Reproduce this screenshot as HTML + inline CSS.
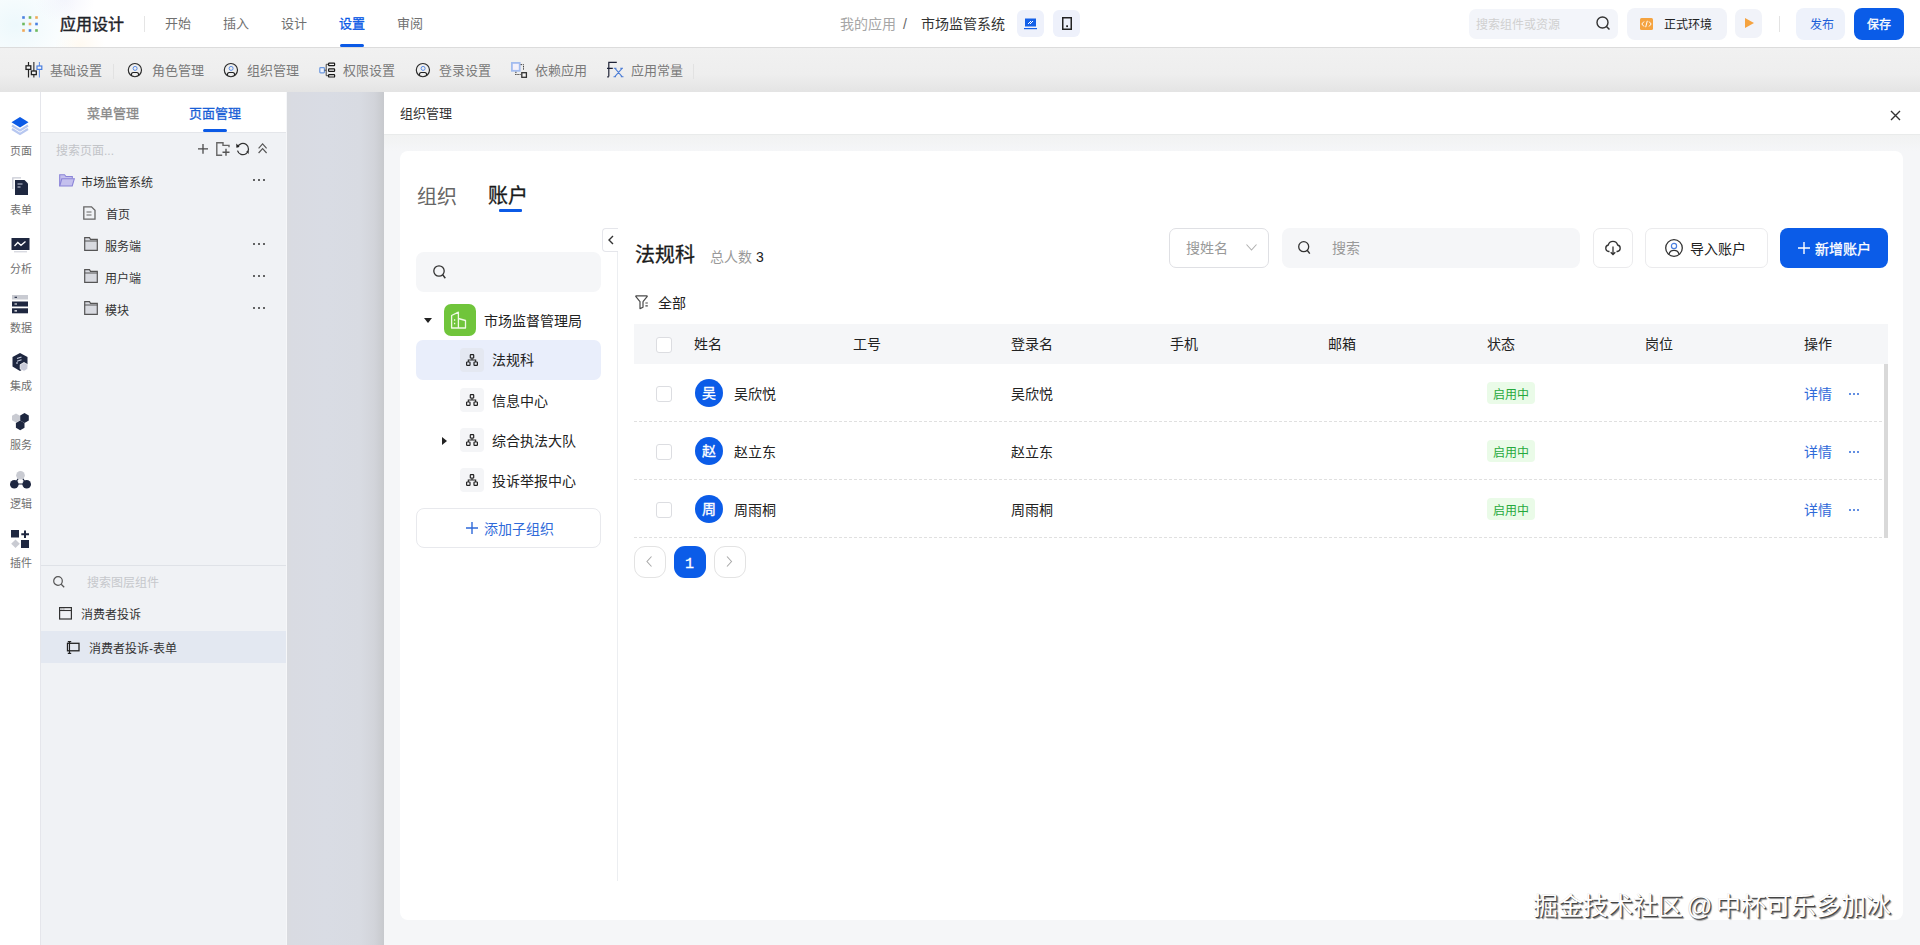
<!DOCTYPE html>
<html lang="zh-CN">
<head>
<meta charset="utf-8">
<style>
*{box-sizing:border-box;margin:0;padding:0}
html,body{width:1920px;height:945px;overflow:hidden;background:#fff;font-family:"Liberation Sans",sans-serif;color:#1f2329;position:relative}
.a{position:absolute}
.t{position:absolute;white-space:nowrap;line-height:1}
svg{position:absolute;overflow:visible}
#hdr{position:absolute;left:0;top:0;width:1920px;height:48px;background:#fff;border-bottom:1px solid #dcdcdc;overflow:hidden}
#tb{position:absolute;left:0;top:48px;width:1920px;height:44px;background:linear-gradient(#f1f1f1 0%,#eeeeee 60%,#e4e4e4 100%)}
#rail{position:absolute;left:0;top:92px;width:41px;height:853px;background:#fff;border-right:1px solid #e5e6eb}
#lp{position:absolute;left:41px;top:92px;width:246px;height:853px;background:#f0f2f5}
#mask{position:absolute;left:287px;top:92px;width:97px;height:853px;background:linear-gradient(90deg,#d9dbdf 0%,#d9dbe2 5%,#d9dce4 40%,#d8dbe2 75%,#d2d4da 90%,#c7c9cd 100%)}
#drawer{position:absolute;left:384px;top:92px;width:1536px;height:853px;background:#f5f6f8}
.nav{font-size:13px;color:#707070}
.tbi{font-size:13px;color:#7a7a7a}
.rl{font-size:11px;color:#707070}
.lpt{font-size:12px;color:#333}
.th{font-size:14px;color:#222}
.td{font-size:14px;color:#222}
.dots{position:absolute;width:14px;height:3px}
.dots i{position:absolute;top:0;width:2.4px;height:2.4px;border-radius:50%;background:#333}
</style>
</head>
<body>
<div id="hdr">
  <div class="a" style="left:-50px;top:-30px;width:130px;height:110px;border-radius:50%;background:radial-gradient(closest-side,rgba(215,240,248,.45),rgba(255,255,255,0))"></div>
  <div class="a" style="left:35px;top:-25px;width:60px;height:50px;border-radius:50%;background:radial-gradient(closest-side,rgba(232,234,250,.45),rgba(255,255,255,0))"></div>
  <div class="a" style="left:55px;top:25px;width:50px;height:40px;border-radius:50%;background:radial-gradient(closest-side,rgba(255,244,225,.45),rgba(255,255,255,0))"></div>
</div>
<div id="tb"></div>
<div id="rail"></div>
<div id="lp"></div>
<div id="mask"></div>
<div id="drawer"></div>

<!-- ============ HEADER CONTENT ============ -->
<svg style="left:22px;top:16px" width="17" height="16">
  <rect x="0.2" y="0.2" width="2.6" height="2.6" fill="#4a80e0"/><rect x="6.7" y="0.2" width="2.6" height="2.6" fill="#6db85e"/><rect x="13.2" y="0.2" width="2.6" height="2.6" fill="#f0a858"/>
  <rect x="0.2" y="6.7" width="2.6" height="2.6" fill="#6db85e"/><rect x="6.7" y="6.7" width="2.6" height="2.6" fill="#f0b068"/><rect x="13.2" y="6.7" width="2.6" height="2.6" fill="#4a80e0"/>
  <rect x="0.2" y="13.2" width="2.6" height="2.6" fill="#f0a858"/><rect x="6.7" y="13.2" width="2.6" height="2.6" fill="#4a80e0"/><rect x="13.2" y="13.2" width="2.6" height="2.6" fill="#6db85e"/>
</svg>
<div class="t" style="left:60px;top:17px;font-size:16px;-webkit-text-stroke:0.45px;color:#1f2329">应用设计</div>
<div class="a" style="left:144px;top:16px;width:1px;height:16px;background:#e5e5e5"></div>
<div class="t nav" style="left:165px;top:17px">开始</div>
<div class="t nav" style="left:223px;top:17px">插入</div>
<div class="t nav" style="left:281px;top:17px">设计</div>
<div class="t nav" style="left:339px;top:17px;color:#0b5ae6;font-weight:400;-webkit-text-stroke:0.3px">设置</div>
<div class="a" style="left:340px;top:44px;width:24px;height:3px;border-radius:2px;background:#0b5ae6"></div>
<div class="t nav" style="left:397px;top:17px">审阅</div>
<div class="t" style="left:840px;top:17px;font-size:14px;color:#a6a6a6">我的应用</div>
<div class="t" style="left:903px;top:17px;font-size:14px;color:#666">/</div>
<div class="t" style="left:921px;top:17px;font-size:14px;color:#333">市场监管系统</div>
<div class="a" style="left:1017px;top:10px;width:27px;height:27px;border-radius:6px;background:#eef1fb"></div>
<svg style="left:1024px;top:18px" width="14" height="12"><rect x="1" y="0.5" width="11" height="8" fill="#1460e8"/><path d="M4 6 L7 3 M6 6 L9 3" stroke="#fff" stroke-width="1"/><rect x="0" y="10" width="13" height="1.2" fill="#1460e8"/></svg>
<div class="a" style="left:1053px;top:10px;width:27px;height:27px;border-radius:6px;background:#eef1fb"></div>
<svg style="left:1062px;top:17px" width="10" height="13"><rect x="0.75" y="0.75" width="8.5" height="11.5" fill="none" stroke="#222" stroke-width="1.5"/><rect x="4.2" y="8.3" width="1.8" height="1.8" fill="#222"/></svg>
<div class="a" style="left:1469px;top:9px;width:149px;height:30px;border-radius:7px;background:#f3f5fa"></div>
<div class="t" style="left:1476px;top:19px;font-size:12px;color:#d0d0d0">搜索组件或资源</div>
<svg style="left:1596px;top:16px" width="15" height="15"><circle cx="6.5" cy="6.5" r="5.5" fill="none" stroke="#333" stroke-width="1.4"/><path d="M10.5 10.5 L13.5 13.5" stroke="#333" stroke-width="1.5"/></svg>
<div class="a" style="left:1627px;top:8px;width:100px;height:32px;border-radius:8px;background:#f1f3f9"></div>
<svg style="left:1640px;top:18px" width="13" height="12"><rect width="13" height="12" rx="1.5" fill="#f5a340"/><path d="M4 3.5 L1.8 6 L4 8.5 M9 3.5 L11.2 6 L9 8.5 M7.3 2.8 L5.7 9.2" stroke="#fff" stroke-width="1" fill="none"/></svg>
<div class="t" style="left:1664px;top:19px;font-size:12px;color:#222">正式环境</div>
<div class="a" style="left:1735px;top:9px;width:27px;height:29px;border-radius:7px;background:#f1f3f9"></div>
<svg style="left:1745px;top:18px" width="9" height="10"><path d="M0 0 L9 5 L0 10 Z" fill="#f5a340"/></svg>
<div class="a" style="left:1779px;top:16px;width:1px;height:16px;background:#e3e3e3"></div>
<div class="a" style="left:1796px;top:8px;width:49px;height:32px;border-radius:8px;background:#eef2fb"></div>
<div class="t" style="left:1810px;top:19px;font-size:12px;color:#1d5fd8">发布</div>
<div class="a" style="left:1854px;top:8px;width:50px;height:32px;border-radius:8px;background:#0a5ce8"></div>
<div class="t" style="left:1867px;top:19px;font-size:12px;color:#fff;font-weight:400;-webkit-text-stroke:0.3px">保存</div>

<!-- ============ TOOLBAR ============ -->
<svg style="left:25px;top:62px" width="18" height="16">
  <path d="M3.5 0 V15.5" stroke="#222" stroke-width="1.2"/><path d="M8.8 0 V15.5" stroke="#666" stroke-width="1.6"/><path d="M14.4 0 V15.5" stroke="#5a8de8" stroke-width="1"/>
  <rect x="1" y="3.8" width="4.8" height="3.6" fill="#f4f4f4" stroke="#222" stroke-width="1.3"/><rect x="6.4" y="9" width="4.9" height="3.6" fill="#f4f4f4" stroke="#222" stroke-width="1.3"/><rect x="12" y="4" width="4.8" height="3.4" fill="#f4f4f4" stroke="#4a7fe0" stroke-width="1.2"/>
</svg>
<div class="t tbi" style="left:50px;top:64px">基础设置</div>
<div class="a" style="left:113px;top:64px;width:1px;height:15px;background:#e2e2e2"></div>
<svg style="left:127px;top:62px" width="16" height="16"><circle cx="7.9" cy="8.1" r="6.6" fill="none" stroke="#2a2a2a" stroke-width="1.15"/><circle cx="8.1" cy="6.4" r="2" fill="none" stroke="#5a8de8" stroke-width="1"/><path d="M4.3 13.2 Q4.4 10.5 6.2 10.5 H9.8 Q11.6 10.5 11.7 13.2" fill="none" stroke="#222" stroke-width="1.15"/></svg>
<div class="t tbi" style="left:152px;top:64px">角色管理</div>
<svg style="left:223px;top:62px" width="16" height="16"><circle cx="7.9" cy="8.1" r="6.6" fill="none" stroke="#2a2a2a" stroke-width="1.15"/><circle cx="8.1" cy="6.4" r="2" fill="none" stroke="#5a8de8" stroke-width="1"/><path d="M4.3 13.2 Q4.4 10.5 6.2 10.5 H9.8 Q11.6 10.5 11.7 13.2" fill="none" stroke="#222" stroke-width="1.15"/></svg>
<div class="t tbi" style="left:247px;top:64px">组织管理</div>
<svg style="left:319px;top:62px" width="17" height="16"><rect x="0.8" y="5.6" width="4.6" height="5.2" rx="0.8" fill="#eef4ff" stroke="#6b97dd" stroke-width="1.2"/><path d="M5.4 8.2 H7.2 M7.2 2.3 V13.7 M7.2 2.3 H9.5 M7.2 13.7 H9.5" fill="none" stroke="#444" stroke-width="1"/><rect x="9.6" y="1.2" width="6" height="2.4" rx="0.6" fill="#f6f6f6" stroke="#1a1a1a" stroke-width="1.2"/><rect x="9.6" y="6.8" width="6" height="2.6" rx="0.6" fill="#f6f6f6" stroke="#1a1a1a" stroke-width="1.2"/><rect x="9.6" y="12.6" width="6" height="2.4" rx="0.6" fill="#f6f6f6" stroke="#1a1a1a" stroke-width="1.2"/></svg>
<div class="t tbi" style="left:343px;top:64px">权限设置</div>
<svg style="left:415px;top:62px" width="16" height="16"><circle cx="7.9" cy="8.1" r="6.6" fill="none" stroke="#2a2a2a" stroke-width="1.15"/><circle cx="8.1" cy="6.4" r="2" fill="none" stroke="#5a8de8" stroke-width="1"/><path d="M4.3 13.2 Q4.4 10.5 6.2 10.5 H9.8 Q11.6 10.5 11.7 13.2" fill="none" stroke="#222" stroke-width="1.15"/></svg>
<div class="t tbi" style="left:439px;top:64px">登录设置</div>
<svg style="left:511px;top:62px" width="17" height="16"><rect x="0.9" y="0.9" width="7.8" height="7.9" fill="#f4f1fb" stroke="#a3bcef" stroke-width="1.8"/><path d="M4.9 9.8 V11.6 M4.2 12.5 H9.6 M9.6 2.6 H12.5 V8.5" fill="none" stroke="#333" stroke-width="1" stroke-dasharray="1.3 0.9"/><rect x="10.8" y="10.7" width="4.6" height="4.6" fill="#f4f4f4" stroke="#333" stroke-width="1.3"/></svg>
<div class="t tbi" style="left:535px;top:64px">依赖应用</div>
<svg style="left:607px;top:61px" width="18" height="17"><path d="M1.8 15.6 V1.4 H9.8 M0 7.4 H5.8 M0.2 15.8 H1.8" fill="none" stroke="#1e2236" stroke-width="1.2"/><path d="M8 7.3 L15.3 15.8 M15.1 7.3 L7.6 15.8 M6.8 7.3 H9.5 M13.2 7.3 H16 M6.5 15.8 H9 M13.8 15.8 H16.5" fill="none" stroke="#4f7fd6" stroke-width="1.1"/></svg>
<div class="t tbi" style="left:631px;top:64px">应用常量</div>
<div class="a" style="left:693px;top:64px;width:1px;height:15px;background:#e2e2e2"></div>

<!-- ============ RAIL ============ -->
<svg style="left:11px;top:117px" width="18" height="20"><path d="M9 0 L17.5 5.2 L9 10.5 L0.5 5.2 Z" fill="#0b5ae6"/><path d="M1 8.5 L9 13.5 L17 8.5 M1 12 L9 17 L17 12" fill="none" stroke="#b7c7f0" stroke-width="2.2"/></svg>
<div class="t rl" style="left:9.5px;top:146px">页面</div>
<svg style="left:12px;top:177px" width="17" height="19"><path d="M0.8 12 V0.8 H9" fill="none" stroke="#c8cad4" stroke-width="1.3"/><path d="M3 3 H12.5 L16 6.5 V18 H3 Z" fill="#1e2740"/><path d="M5.5 7 H10.5 M5.5 10 H8.5" stroke="#c9cfe0" stroke-width="1.2"/></svg>
<div class="t rl" style="left:9.5px;top:205px">表单</div>
<svg style="left:11px;top:238px" width="19" height="15"><rect x="0.5" y="0" width="18" height="12" fill="#1e2740"/><path d="M3.5 8 L6.8 4.5 L10 7.3 L14.5 3.5" fill="none" stroke="#fff" stroke-width="1.3"/><path d="M3 13.8 H16" stroke="#c8cad4" stroke-width="1"/></svg>
<div class="t rl" style="left:9.5px;top:264px">分析</div>
<svg style="left:12px;top:295px" width="16" height="19"><rect x="0" y="0" width="16" height="4.5" fill="#c9cbd2"/><rect x="0" y="6.5" width="16" height="5" fill="#1e2740"/><rect x="0" y="13.3" width="16" height="5" fill="#1e2740"/><path d="M2.5 2.3 H5 M2.5 9 H5 M2.5 15.8 H5" stroke="#fff" stroke-width="1.2"/><path d="M2.5 2.3 H5" stroke="#1e2740" stroke-width="1.2"/></svg>
<div class="t rl" style="left:9.5px;top:323px">数据</div>
<svg style="left:12px;top:353px" width="17" height="19"><path d="M8 0 L15.5 4 V13.5 L8 18 L0.5 13.5 V4 Z" fill="#1e2740"/><path d="M5 5.5 L9.5 4 M5 8.2 L9.5 6.8 M5 9 L5 11" stroke="#c9cfe0" stroke-width="1.1"/><path d="M12 9.5 L15.8 11.7 V16 L12 18.3 L8.2 16 V11.7 Z" fill="#c9cbd9" stroke="#fff" stroke-width="0.8"/></svg>
<div class="t rl" style="left:9.5px;top:381px">集成</div>
<svg style="left:11px;top:413px" width="19" height="18"><path d="M5 0.5 L9 2.8 V7.2 L5 9.5 L1 7.2 V2.8 Z" fill="#c9cbd2"/><path d="M13.5 0 L17.8 2.5 V7.5 L13.5 10 L9.2 7.5 V2.5 Z" fill="#1e2740"/><path d="M9.2 7.5 L13.5 10 V14.8 L9.2 17.3 L4.9 14.8 V10 Z" fill="#1e2740"/></svg>
<div class="t rl" style="left:9.5px;top:440px">服务</div>
<svg style="left:10px;top:471px" width="21" height="18"><path d="M10.5 4.5 L4.5 13 H16.5 Z" fill="none" stroke="#1e2740" stroke-width="1.2"/><circle cx="10.5" cy="4.3" r="4.3" fill="#c9cbd2"/><circle cx="4.3" cy="13.3" r="4.3" fill="#1e2740"/><circle cx="16.7" cy="13.3" r="4.3" fill="#1e2740"/></svg>
<div class="t rl" style="left:9.5px;top:499px">逻辑</div>
<svg style="left:11px;top:530px" width="19" height="18"><rect x="0" y="0" width="8" height="7.5" fill="#1e2740"/><path d="M14 0.5 V8 M10.3 4.2 H18" stroke="#1e2740" stroke-width="2"/><path d="M4.5 9.5 L8.8 13.8 L4.5 18 L0.2 13.8 Z" fill="#c9cbd2"/><rect x="10" y="10" width="8" height="8" fill="#1e2740"/></svg>
<div class="t rl" style="left:9.5px;top:558px">插件</div>

<!-- ============ LEFT PANEL ============ -->
<div class="a" style="left:41px;top:92px;width:245px;height:41px;background:#fff;border-bottom:1px solid #e4e6ea"></div>
<div class="a" style="left:286px;top:92px;width:1px;height:853px;background:#f6f7f9"></div>
<div class="t" style="left:87px;top:107px;font-size:13px;color:#888;font-weight:400;-webkit-text-stroke:0.3px">菜单管理</div>
<div class="t" style="left:189px;top:107px;font-size:13px;color:#1a5fd6;font-weight:400;-webkit-text-stroke:0.3px">页面管理</div>
<div class="a" style="left:203px;top:129px;width:24px;height:3px;border-radius:2px;background:#0b5ae6"></div>
<div class="t" style="left:56px;top:145px;font-size:12px;color:#c2c4c8">搜索页面...</div>
<svg style="left:198px;top:144px" width="12" height="12"><path d="M5 0 V9.8 M0 4.9 H10" stroke="#4a4a4a" stroke-width="1.3"/></svg>
<svg style="left:216px;top:142px" width="15" height="15"><path d="M6.2 13.3 H0.8 V0.8 H7 V3.4 H13 V5.2" fill="none" stroke="#666" stroke-width="1.4"/><path d="M10 6.8 V13.8 M6.5 10.3 H13.5" stroke="#555" stroke-width="1.4"/></svg>
<svg style="left:236px;top:142px" width="14" height="14"><path d="M1.6 5.2 A5.6 5.6 0 1 1 1.5 8.6" fill="none" stroke="#333" stroke-width="1.25"/><path d="M0.3 1.6 L3.6 4.8 L0.3 5.7 Z" fill="#222"/><path d="M12.6 8.2 L12.7 12 L10.1 9.8 Z" fill="#333"/></svg>
<svg style="left:258px;top:143px" width="11" height="11"><path d="M0.6 5.3 L4.6 0.9 L8.6 5.3 M0.6 10 L4.6 5.6 L8.6 10" fill="none" stroke="#555" stroke-width="1.15"/></svg>
<svg style="left:59px;top:174px" width="16" height="13"><path d="M0.7 12 V0.7 H5.5 L7 2.5 H13.3 V4.5" fill="#c4c0ee" stroke="#8a84d8" stroke-width="1.1"/><path d="M0.7 12 L2.8 4.8 H15.3 L13.2 12 Z" fill="#c4c0ee" stroke="#8a84d8" stroke-width="1.1"/></svg>
<div class="t lpt" style="left:81px;top:177px">市场监管系统</div>
<div class="dots" style="left:253px;top:179px"><i style="left:0"></i><i style="left:5px"></i><i style="left:10px"></i></div>
<svg style="left:83px;top:206px" width="13" height="14"><path d="M0.8 0.8 H8.5 L12 4.3 V13.2 H0.8 Z" fill="none" stroke="#666" stroke-width="1.3"/><path d="M3.5 6 H8.5 M3.5 9 H8.5" stroke="#666" stroke-width="1.2"/></svg>
<div class="t lpt" style="left:106px;top:209px">首页</div>
<svg style="left:84px;top:237px" width="14" height="14"><path d="M0.7 13.3 V0.7 H5.5 L6.5 2.3 H13.3 V13.3 Z" fill="#d8dae0" stroke="#555" stroke-width="1.2"/><path d="M0.7 4 H13.3" stroke="#555" stroke-width="1"/></svg>
<div class="t lpt" style="left:105px;top:241px">服务端</div>
<div class="dots" style="left:253px;top:243px"><i style="left:0"></i><i style="left:5px"></i><i style="left:10px"></i></div>
<svg style="left:84px;top:269px" width="14" height="14"><path d="M0.7 13.3 V0.7 H5.5 L6.5 2.3 H13.3 V13.3 Z" fill="#d8dae0" stroke="#555" stroke-width="1.2"/><path d="M0.7 4 H13.3" stroke="#555" stroke-width="1"/></svg>
<div class="t lpt" style="left:105px;top:273px">用户端</div>
<div class="dots" style="left:253px;top:275px"><i style="left:0"></i><i style="left:5px"></i><i style="left:10px"></i></div>
<svg style="left:84px;top:301px" width="14" height="14"><path d="M0.7 13.3 V0.7 H5.5 L6.5 2.3 H13.3 V13.3 Z" fill="#d8dae0" stroke="#555" stroke-width="1.2"/><path d="M0.7 4 H13.3" stroke="#555" stroke-width="1"/></svg>
<div class="t lpt" style="left:105px;top:305px">模块</div>
<div class="dots" style="left:253px;top:307px"><i style="left:0"></i><i style="left:5px"></i><i style="left:10px"></i></div>

<div class="a" style="left:41px;top:565px;width:245px;height:1px;background:#dfe2e7"></div>
<svg style="left:53px;top:576px" width="12" height="12"><circle cx="5" cy="5" r="4.3" fill="none" stroke="#555" stroke-width="1.2"/><path d="M8.2 8.2 L11.2 11.2" stroke="#555" stroke-width="1.3"/></svg>
<div class="t" style="left:87px;top:577px;font-size:12px;color:#c6c8cc">搜索图层组件</div>
<svg style="left:59px;top:607px" width="13" height="13"><rect x="0.6" y="0.6" width="11.8" height="11.4" fill="none" stroke="#333" stroke-width="1.2"/><path d="M0.6 3.5 H12.4" stroke="#333" stroke-width="1.1"/><path d="M2.5 2 H3.3 M4.5 2 H5.3" stroke="#333" stroke-width="0.8"/></svg>
<div class="t lpt" style="left:81px;top:609px">消费者投诉</div>
<div class="a" style="left:41px;top:631px;width:245px;height:32px;background:#e3e8f1"></div>
<svg style="left:66px;top:641px" width="14" height="13"><rect x="1.5" y="2.3" width="11.5" height="7.5" fill="none" stroke="#222" stroke-width="1.3"/><path d="M3.5 0.6 V12.4 M1.8 0.6 H5.2 M1.8 12.4 H5.2" stroke="#222" stroke-width="1.1"/></svg>
<div class="t lpt" style="left:89px;top:643px">消费者投诉-表单</div>

<!-- ============ DRAWER ============ -->
<div class="a" style="left:384px;top:92px;width:1536px;height:43px;background:#fff;border-bottom:1px solid #e9ebeb"></div>
<div class="a" style="left:384px;top:135px;width:1536px;height:16px;background:linear-gradient(#f1f2f2,#f5f6f8)"></div>
<div class="t" style="left:400px;top:107px;font-size:13px;color:#333">组织管理</div>
<svg style="left:1889.5px;top:109.5px" width="11" height="11"><path d="M1 1 L10 10 M10 1 L1 10" stroke="#333" stroke-width="1.4"/></svg>
<div class="a" style="left:400px;top:151px;width:1503px;height:769px;background:#fff;border-radius:8px"></div>

<div class="t" style="left:417px;top:187px;font-size:20px;color:#666">组织</div>
<div class="t" style="left:488px;top:186px;font-size:20px;color:#1a1a1a;font-weight:400;-webkit-text-stroke:0.3px">账户</div>
<div class="a" style="left:499px;top:209px;width:23px;height:3px;border-radius:1px;background:#0b5ae6"></div>

<!-- org tree -->
<div class="a" style="left:416px;top:252px;width:185px;height:40px;background:#f5f6f8;border-radius:8px"></div>
<svg style="left:433px;top:265px" width="14" height="15"><circle cx="6" cy="6" r="5.2" fill="none" stroke="#333" stroke-width="1.3"/><path d="M9.7 9.8 L12.3 13.2" stroke="#333" stroke-width="1.4"/></svg>
<div class="a" style="left:617px;top:251px;width:1px;height:630px;background:#eceef1"></div>
<div class="a" style="left:602px;top:228px;width:16px;height:24px;border:1px solid #e5e6eb;border-right:none;border-radius:4px 0 0 4px;background:#fff"></div>
<svg style="left:607px;top:235px" width="8" height="10"><path d="M6 1 L2 5 L6 9" fill="none" stroke="#333" stroke-width="1.4"/></svg>

<svg style="left:424px;top:318px" width="8" height="5"><path d="M0 0 H8 L4 5 Z" fill="#222"/></svg>
<div class="a" style="left:444px;top:304px;width:32px;height:32px;border-radius:7px;background:#70c53b"></div>
<svg style="left:450px;top:311px" width="20" height="19"><path d="M1.6 17 V4.5 L8.4 1.2 V17 Z M8.4 17 V7.5 L15.5 9.5 V17 Z" fill="none" stroke="#f0fae6" stroke-width="1.3" stroke-linejoin="round"/><path d="M4.6 8.3 V9.7 M4.6 11.8 V13.2" stroke="#f0fae6" stroke-width="1.3"/></svg>
<div class="t" style="left:484px;top:314px;font-size:14px;color:#222">市场监督管理局</div>

<div class="a" style="left:416px;top:340px;width:185px;height:40px;background:#e9eefb;border-radius:7px"></div>
<div class="a" style="left:460px;top:348px;width:24px;height:24px;background:#e4e8f1;border-radius:4px"></div>
<div class="t" style="left:492px;top:353px;font-size:14px;color:#222">法规科</div>
<div class="a" style="left:460px;top:388px;width:24px;height:24px;background:#f4f5f7;border-radius:4px"></div>
<div class="t" style="left:492px;top:394px;font-size:14px;color:#222">信息中心</div>
<svg style="left:442px;top:437px" width="5" height="8"><path d="M0 0 L5 4 L0 8 Z" fill="#222"/></svg>
<div class="a" style="left:460px;top:428px;width:24px;height:24px;background:#f4f5f7;border-radius:4px"></div>
<div class="t" style="left:492px;top:434px;font-size:14px;color:#222">综合执法大队</div>
<div class="a" style="left:460px;top:468px;width:24px;height:24px;background:#f4f5f7;border-radius:4px"></div>
<div class="t" style="left:492px;top:474px;font-size:14px;color:#222">投诉举报中心</div>
<svg style="left:466px;top:354px" width="12" height="12"><rect x="4.3" y="0.6" width="3.4" height="3.4" rx="0.6" fill="none" stroke="#222" stroke-width="1.2"/><rect x="0.6" y="8" width="3.4" height="3.4" rx="0.6" fill="none" stroke="#222" stroke-width="1.2"/><rect x="8" y="8" width="3.4" height="3.4" rx="0.6" fill="none" stroke="#222" stroke-width="1.2"/><path d="M6 4 V6 M2.3 8 V6 H9.7 V8" fill="none" stroke="#222" stroke-width="1.1"/></svg>
<svg style="left:466px;top:394px" width="12" height="12"><rect x="4.3" y="0.6" width="3.4" height="3.4" rx="0.6" fill="none" stroke="#222" stroke-width="1.2"/><rect x="0.6" y="8" width="3.4" height="3.4" rx="0.6" fill="none" stroke="#222" stroke-width="1.2"/><rect x="8" y="8" width="3.4" height="3.4" rx="0.6" fill="none" stroke="#222" stroke-width="1.2"/><path d="M6 4 V6 M2.3 8 V6 H9.7 V8" fill="none" stroke="#222" stroke-width="1.1"/></svg>
<svg style="left:466px;top:434px" width="12" height="12"><rect x="4.3" y="0.6" width="3.4" height="3.4" rx="0.6" fill="none" stroke="#222" stroke-width="1.2"/><rect x="0.6" y="8" width="3.4" height="3.4" rx="0.6" fill="none" stroke="#222" stroke-width="1.2"/><rect x="8" y="8" width="3.4" height="3.4" rx="0.6" fill="none" stroke="#222" stroke-width="1.2"/><path d="M6 4 V6 M2.3 8 V6 H9.7 V8" fill="none" stroke="#222" stroke-width="1.1"/></svg>
<svg style="left:466px;top:474px" width="12" height="12"><rect x="4.3" y="0.6" width="3.4" height="3.4" rx="0.6" fill="none" stroke="#222" stroke-width="1.2"/><rect x="0.6" y="8" width="3.4" height="3.4" rx="0.6" fill="none" stroke="#222" stroke-width="1.2"/><rect x="8" y="8" width="3.4" height="3.4" rx="0.6" fill="none" stroke="#222" stroke-width="1.2"/><path d="M6 4 V6 M2.3 8 V6 H9.7 V8" fill="none" stroke="#222" stroke-width="1.1"/></svg>
<div class="a" style="left:416px;top:508px;width:185px;height:40px;border:1px solid #e8e9ed;border-radius:8px;background:#fff"></div>
<svg style="left:466px;top:522px" width="12" height="12"><path d="M6 0 V12 M0 6 H12" stroke="#2f6ad9" stroke-width="1.4"/></svg>
<div class="t" style="left:484px;top:522px;font-size:14px;color:#2f6ad9">添加子组织</div>

<!-- right content -->
<div class="t" style="left:635px;top:245px;font-size:20px;color:#1a1a1a;font-weight:400;-webkit-text-stroke:0.3px">法规科</div>
<div class="t" style="left:710px;top:250px;font-size:14px;color:#999">总人数 <span style="color:#222">3</span></div>

<div class="a" style="left:1169px;top:228px;width:100px;height:40px;border:1px solid #dfe0e4;border-radius:7px;background:#fff"></div>
<div class="t" style="left:1186px;top:241px;font-size:14px;color:#999">搜姓名</div>
<svg style="left:1246px;top:244px" width="11" height="7"><path d="M0.5 0.5 L5.5 6 L10.5 0.5" fill="none" stroke="#b0b0b0" stroke-width="1.1"/></svg>
<div class="a" style="left:1282px;top:228px;width:298px;height:40px;background:#f5f6f8;border-radius:8px"></div>
<svg style="left:1298px;top:241px" width="13" height="14"><circle cx="5.7" cy="5.7" r="5" fill="none" stroke="#333" stroke-width="1.3"/><path d="M9.2 9.3 L11.8 12.6" stroke="#333" stroke-width="1.4"/></svg>
<div class="t" style="left:1332px;top:241px;font-size:14px;color:#999">搜索</div>
<div class="a" style="left:1593px;top:228px;width:40px;height:40px;border:1px solid #ebebed;border-radius:7px;background:#fff"></div>
<svg style="left:1605px;top:240px" width="16" height="16"><path d="M4.5 11.5 H3.8 A3.3 3.3 0 0 1 3.3 5 A4.8 4.8 0 0 1 12.6 5 A3.3 3.3 0 0 1 12.3 11.5 H11.5" fill="none" stroke="#333" stroke-width="1.3"/><path d="M8 6.5 V14.5 M5.7 12.2 L8 14.5 L10.3 12.2" fill="none" stroke="#333" stroke-width="1.3"/></svg>
<div class="a" style="left:1645px;top:228px;width:123px;height:40px;border:1px solid #ebebed;border-radius:7px;background:#fff"></div>
<svg style="left:1665px;top:239px" width="18" height="18"><circle cx="9" cy="9" r="8.3" fill="none" stroke="#333" stroke-width="1.3"/><circle cx="9" cy="7" r="2.6" fill="none" stroke="#4a7fe0" stroke-width="1.2"/><path d="M4 15.2 Q4.8 11.3 9 11.3 Q13.2 11.3 14 15.2" fill="none" stroke="#333" stroke-width="1.3"/></svg>
<div class="t" style="left:1690px;top:242px;font-size:14px;color:#222">导入账户</div>
<div class="a" style="left:1780px;top:228px;width:108px;height:40px;border-radius:8px;background:#0b5ce8"></div>
<svg style="left:1798px;top:242px" width="12" height="12"><path d="M6 0 V12 M0 6 H12" stroke="#fff" stroke-width="1.4"/></svg>
<div class="t" style="left:1815px;top:242px;font-size:14px;color:#fff;font-weight:400;-webkit-text-stroke:0.3px">新增账户</div>

<svg style="left:635px;top:295px" width="15" height="15"><path d="M1.3 0.8 H11.7 Q12.6 0.8 12.1 1.6 L8 6.6 M1.3 0.8 Q0.4 0.8 0.9 1.6 L5 6.6 V13.6 L8 12.2 V6.6" fill="none" stroke="#4a4a4a" stroke-width="1.2" stroke-linejoin="round"/><path d="M10.4 8 H12.8 M10.4 10.8 H12.8" stroke="#4a4a4a" stroke-width="1.2"/></svg>
<div class="t" style="left:658px;top:296px;font-size:14px;color:#222">全部</div>

<div class="a" style="left:634px;top:324px;width:1254px;height:40px;background:#f5f6f8"></div>
<div class="a" style="left:656px;top:337px;width:16px;height:16px;border:1px solid #dcdde1;border-radius:3px;background:#fff"></div>
<div class="t th" style="left:694px;top:337px">姓名</div>
<div class="t th" style="left:853px;top:337px">工号</div>
<div class="t th" style="left:1011px;top:337px">登录名</div>
<div class="t th" style="left:1170px;top:337px">手机</div>
<div class="t th" style="left:1328px;top:337px">邮箱</div>
<div class="t th" style="left:1487px;top:337px">状态</div>
<div class="t th" style="left:1645px;top:337px">岗位</div>
<div class="t th" style="left:1804px;top:337px">操作</div>
<div class="a" style="left:656px;top:386px;width:16px;height:16px;border:1px solid #dcdde1;border-radius:3px;background:#fff"></div>
<div class="a" style="left:695px;top:379px;width:28px;height:28px;border-radius:50%;background:#0b5ce8"></div>
<div class="t" style="left:702px;top:386px;font-size:14px;color:#fff;-webkit-text-stroke:0.35px">吴</div>
<div class="t td" style="left:734px;top:387px">吴欣悦</div>
<div class="t td" style="left:1011px;top:387px">吴欣悦</div>
<div class="a" style="left:1487px;top:382px;width:48px;height:22px;border-radius:4px;background:#eafbe8"></div>
<div class="t" style="left:1493px;top:388px;font-size:12px;color:#25a93c;margin-top:1px">启用中</div>
<div class="t" style="left:1804px;top:387px;font-size:14px;color:#2f6ad9">详情</div>
<div class="dots" style="left:1849px;top:392px;margin-top:0.5px"><i style="left:0;background:#2f6ad9"></i><i style="left:4px;background:#2f6ad9"></i><i style="left:8px;background:#2f6ad9"></i></div>
<div class="a" style="left:634px;top:421px;width:1250px;height:1px;background-image:linear-gradient(90deg,#e0e0e0 60%,transparent 60%);background-size:5px 1px"></div>
<div class="a" style="left:656px;top:444px;width:16px;height:16px;border:1px solid #dcdde1;border-radius:3px;background:#fff"></div>
<div class="a" style="left:695px;top:437px;width:28px;height:28px;border-radius:50%;background:#0b5ce8"></div>
<div class="t" style="left:702px;top:444px;font-size:14px;color:#fff;-webkit-text-stroke:0.35px">赵</div>
<div class="t td" style="left:734px;top:445px">赵立东</div>
<div class="t td" style="left:1011px;top:445px">赵立东</div>
<div class="a" style="left:1487px;top:440px;width:48px;height:22px;border-radius:4px;background:#eafbe8"></div>
<div class="t" style="left:1493px;top:446px;font-size:12px;color:#25a93c;margin-top:1px">启用中</div>
<div class="t" style="left:1804px;top:445px;font-size:14px;color:#2f6ad9">详情</div>
<div class="dots" style="left:1849px;top:450px;margin-top:0.5px"><i style="left:0;background:#2f6ad9"></i><i style="left:4px;background:#2f6ad9"></i><i style="left:8px;background:#2f6ad9"></i></div>
<div class="a" style="left:634px;top:479px;width:1250px;height:1px;background-image:linear-gradient(90deg,#e0e0e0 60%,transparent 60%);background-size:5px 1px"></div>
<div class="a" style="left:656px;top:502px;width:16px;height:16px;border:1px solid #dcdde1;border-radius:3px;background:#fff"></div>
<div class="a" style="left:695px;top:495px;width:28px;height:28px;border-radius:50%;background:#0b5ce8"></div>
<div class="t" style="left:702px;top:502px;font-size:14px;color:#fff;-webkit-text-stroke:0.35px">周</div>
<div class="t td" style="left:734px;top:503px">周雨桐</div>
<div class="t td" style="left:1011px;top:503px">周雨桐</div>
<div class="a" style="left:1487px;top:498px;width:48px;height:22px;border-radius:4px;background:#eafbe8"></div>
<div class="t" style="left:1493px;top:504px;font-size:12px;color:#25a93c;margin-top:1px">启用中</div>
<div class="t" style="left:1804px;top:503px;font-size:14px;color:#2f6ad9">详情</div>
<div class="dots" style="left:1849px;top:508px;margin-top:0.5px"><i style="left:0;background:#2f6ad9"></i><i style="left:4px;background:#2f6ad9"></i><i style="left:8px;background:#2f6ad9"></i></div>
<div class="a" style="left:634px;top:537px;width:1250px;height:1px;background-image:linear-gradient(90deg,#e0e0e0 60%,transparent 60%);background-size:5px 1px"></div>
<div class="a" style="left:1884px;top:364px;width:4px;height:174px;background:#d9d9d9"></div>

<div class="a" style="left:634px;top:546px;width:32px;height:32px;border:1px solid #e3e3e3;border-radius:11px;background:#fff"></div>
<svg style="left:646px;top:556px" width="7" height="11"><path d="M5.5 0.5 L1 5.5 L5.5 10.5" fill="none" stroke="#aaa" stroke-width="1.1"/></svg>
<div class="a" style="left:674px;top:546px;width:32px;height:32px;border-radius:11px;background:#0b5ce8"></div>
<div class="t" style="left:685px;top:557px;font-size:15px;color:#fff;font-family:'Liberation Mono',monospace;-webkit-text-stroke:0.3px">1</div>
<div class="a" style="left:714px;top:546px;width:32px;height:32px;border:1px solid #e3e3e3;border-radius:11px;background:#fff"></div>
<svg style="left:726px;top:556px" width="7" height="11"><path d="M1 0.5 L5.5 5.5 L1 10.5" fill="none" stroke="#aaa" stroke-width="1.1"/></svg>

<div class="t" style="left:1533px;top:894px;font-size:25px;word-spacing:-3px;color:#fff;text-shadow:1px 1px 0 #444,1.5px 1.5px 1px #888,-0.5px -0.5px 0 #ccc">掘金技术社区 @ 中杯可乐多加冰</div>
</body></html>
